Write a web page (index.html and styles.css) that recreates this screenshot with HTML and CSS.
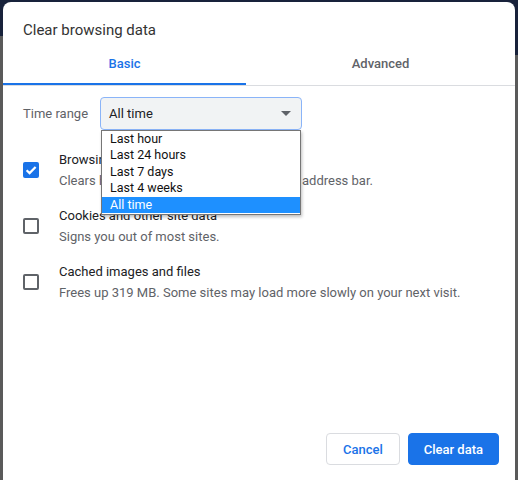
FILE: index.html
```html
<!DOCTYPE html>
<html>
<head>
<meta charset="utf-8">
<link rel="stylesheet" href="styles.css">
</head>
<body>
<div class="backdrop-left"></div>
<div class="backdrop-right"></div>
<div class="dialog">
  <div class="title">Clear browsing data</div>
  <div class="tabs">
    <div class="tab tab-active">Basic</div>
    <div class="tab tab-other">Advanced</div>
  </div>
  <div class="content">
    <div class="range-row">
      <span class="range-label">Time range</span>
      <div class="select-wrap">
        <div class="select">
          <span>All time</span>
          <span class="arrow"></span>
        </div>
        <ul class="options">
          <li>Last hour</li>
          <li>Last 24 hours</li>
          <li>Last 7 days</li>
          <li>Last 4 weeks</li>
          <li class="selected">All time</li>
        </ul>
      </div>
    </div>
    <div class="items">
      <div class="item">
        <span class="box checked">
          <svg viewBox="0 0 16 16" width="16" height="16"><path d="M3.6 8.2 L6.6 11.1 L12.6 4.9" fill="none" stroke="#fff" stroke-width="2.2"/></svg>
        </span>
        <div class="texts">
          <div class="primary">Browsing history</div>
          <div class="secondary">Clears history and autocompletions in the address bar.</div>
        </div>
      </div>
      <div class="item">
        <span class="box"></span>
        <div class="texts">
          <div class="primary">Cookies and other site data</div>
          <div class="secondary">Signs you out of most sites.</div>
        </div>
      </div>
      <div class="item">
        <span class="box"></span>
        <div class="texts">
          <div class="primary">Cached images and files</div>
          <div class="secondary">Frees up 319 MB. Some sites may load more slowly on your next visit.</div>
        </div>
      </div>
    </div>
  </div>
  <div class="footer">
    <button class="btn btn-cancel">Cancel</button>
    <button class="btn btn-primary">Clear data</button>
  </div>
</div>
</body>
</html>
```
FILE: styles.css
```css
html, body {
  margin: 0;
  padding: 0;
}
body {
  width: 518px;
  height: 480px;
  overflow: hidden;
  background: #5a5a5a;
  font-family: Roboto, "Liberation Sans", sans-serif;
  position: relative;
}
.backdrop-left {
  position: absolute;
  left: 0;
  top: 0;
  width: 260px;
  height: 36px;
  background: #18223b;
}
.backdrop-right {
  position: absolute;
  right: 0;
  top: 0;
  width: 260px;
  height: 55px;
  background: #18223b;
}
.dialog {
  position: relative;
  margin: 2px 0 0 3px;
  width: 512px;
  height: 478px;
  background: #fff;
  border-radius: 8px 8px 0 0;
  display: flex;
  flex-direction: column;
}
.title {
  padding: 18px 20px 0 20px;
  height: 19px;
  font-size: 15px;
  line-height: 20px;
  color: #333;
}
.tabs {
  display: flex;
  border-bottom: 1px solid #dadce0;
}
.tab {
  padding: 15px 0 9px 0;
  font-size: 13px;
  line-height: 20px;
  font-weight: 500;
  text-align: center;
  border-bottom: 2px solid transparent;
}
.tab-active {
  width: 243px;
  color: #1a73e8;
  border-bottom-color: #1a73e8;
}
.tab-other {
  flex: 1;
  color: #5f6368;
}
.content {
  padding: 11px 20px 0 20px;
}
.range-row {
  display: flex;
  align-items: center;
  gap: 12px;
}
.range-label {
  font-size: 13px;
  color: #5f6368;
}
.select-wrap {
  position: relative;
}
.select {
  box-sizing: border-box;
  width: 202px;
  height: 33px;
  border: 1px solid #8ab4f8;
  border-radius: 4px;
  background: #f1f3f4;
  display: flex;
  align-items: center;
  justify-content: space-between;
  padding: 0 10px 0 8px;
  font-size: 13px;
  color: #202124;
}
.arrow {
  width: 0;
  height: 0;
  border-left: 5px solid transparent;
  border-right: 5px solid transparent;
  border-top: 5px solid #5f6368;
}
.options {
  position: absolute;
  left: 1px;
  top: 33px;
  box-sizing: border-box;
  width: 200px;
  margin: 0;
  padding: 0 0 1px 0;
  list-style: none;
  background: #fff;
  border: 1px solid #767676;
  box-shadow: 1px 2px 3px rgba(0,0,0,0.25);
  z-index: 2;
}
.options li {
  font-size: 12.5px;
  line-height: 16.4px;
  padding-left: 8px;
  color: #111;
}
.options li.selected {
  background: #1e90ff;
  color: #fff;
}
.items {
  margin-top: 19px;
  display: flex;
  flex-direction: column;
  gap: 14px;
}
.item {
  display: flex;
  align-items: center;
  gap: 20px;
}
.box {
  box-sizing: border-box;
  width: 16px;
  height: 16px;
  border: 2px solid #5f6368;
  border-radius: 2px;
  flex: none;
  display: flex;
}
.box.checked {
  border: none;
  background: #1a73e8;
}
.texts {
  font-size: 13px;
  line-height: 21px;
}
.primary {
  color: #202124;
}
.secondary {
  color: #5f6368;
}
.footer {
  margin-top: auto;
  display: flex;
  justify-content: flex-end;
  gap: 8px;
  padding: 0 16px 15px 0;
}
.btn {
  height: 32px;
  padding: 0 15px;
  border-radius: 4px;
  font-family: Roboto, "Liberation Sans", sans-serif;
  font-size: 13px;
  font-weight: 500;
  cursor: pointer;
}
.btn-cancel {
  padding: 0 16px;
  background: #fff;
  color: #1a73e8;
  border: 1px solid #dadce0;
}
.btn-primary {
  background: #1a73e8;
  color: #fff;
  border: 1px solid #1a73e8;
}
```
